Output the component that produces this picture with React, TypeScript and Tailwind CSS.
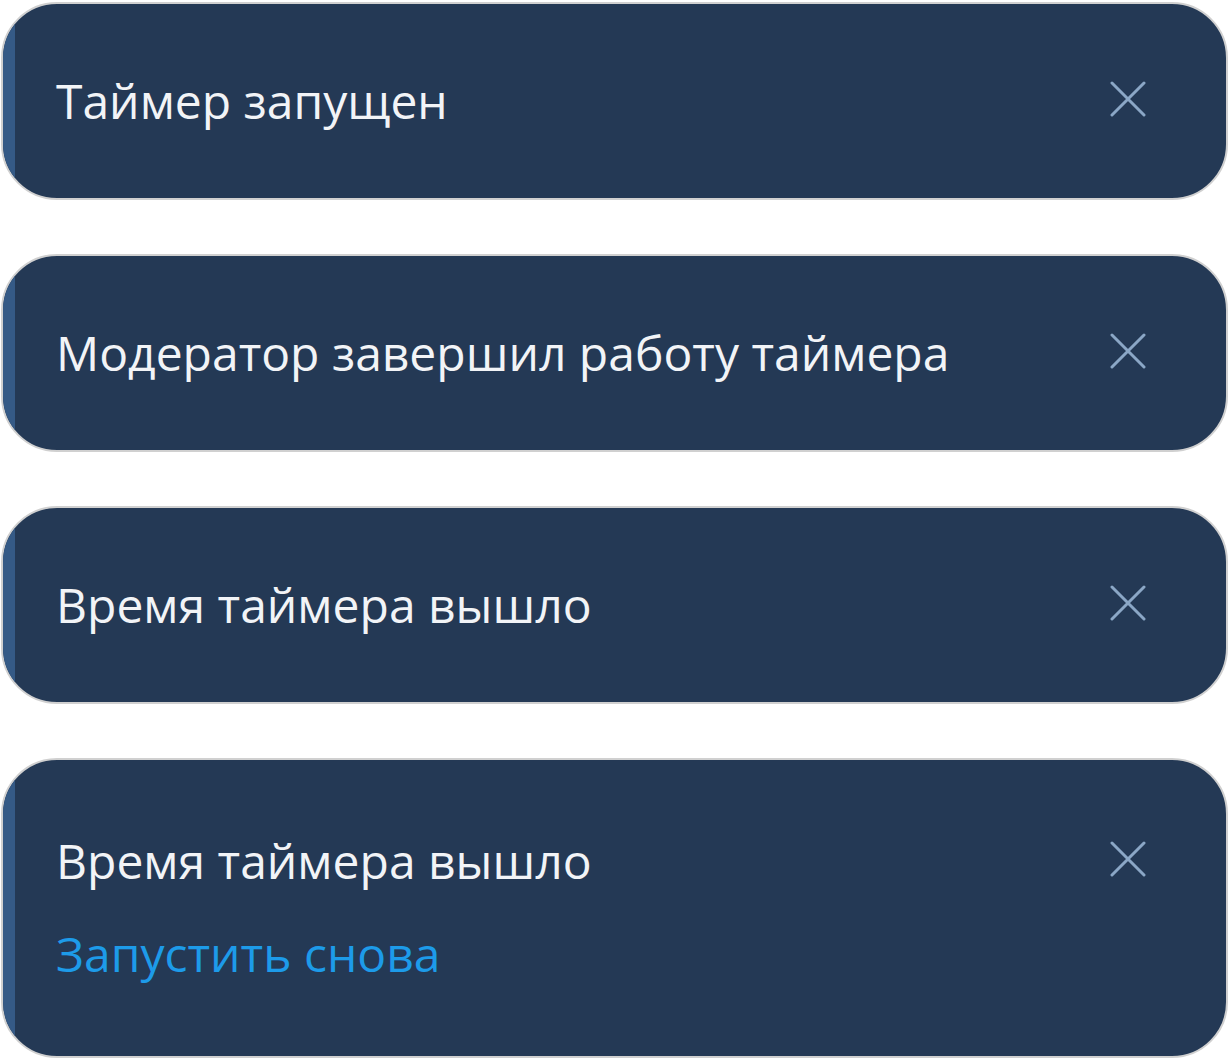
import React from "react";

type Toast = {
  id: number;
  message: string;
  action?: string;
};

const toasts: Toast[] = [
  { id: 1, message: "Таймер запущен" },
  { id: 2, message: "Модератор завершил работу таймера" },
  { id: 3, message: "Время таймера вышло" },
  { id: 4, message: "Время таймера вышло", action: "Запустить снова" },
];

function CloseIcon() {
  return (
    <svg viewBox="0 0 36 36" className="w-[36px] h-[36px]" fill="none">
      <path
        d="M2 2 L34 34 M34 2 L2 34"
        stroke="#8ba7c6"
        strokeWidth="3"
        strokeLinecap="round"
      />
    </svg>
  );
}

function ToastCard({ toast }: { toast: Toast }) {
  // the toast with an action sits a few px lower in its box
  const pad = toast.action ? "pt-[67px] pb-[68px]" : "pt-[63px] pb-[63px]";
  return (
    <div className="flex rounded-[56px] border-2 border-[#d0d0d0] bg-[#243955] overflow-hidden">
      {/* accent strip on the left edge */}
      <div className="w-[12px] shrink-0 bg-[#355a86]" />
      <div className={`flex flex-1 items-start justify-between pl-[41px] pr-[80px] ${pad}`}>
        <div className="flex flex-col gap-[25px]">
          <p className="text-[48px] leading-[68px] text-[#f2f4f7]">{toast.message}</p>
          {toast.action && (
            <button className="text-left text-[48px] leading-[68px] text-[#1d9be9]">
              {toast.action}
            </button>
          )}
        </div>
        <button className="mt-[14px]" aria-label="Закрыть">
          <CloseIcon />
        </button>
      </div>
    </div>
  );
}

export default function App() {
  return (
    <div
      className="w-[1229px] min-h-[1061px] bg-white px-[1px] pt-[2px] flex flex-col gap-[54px]"
      style={{ fontFamily: '"Open Sans", "Noto Sans", sans-serif' }}
    >
      {toasts.map((t) => (
        <ToastCard key={t.id} toast={t} />
      ))}
    </div>
  );
}
